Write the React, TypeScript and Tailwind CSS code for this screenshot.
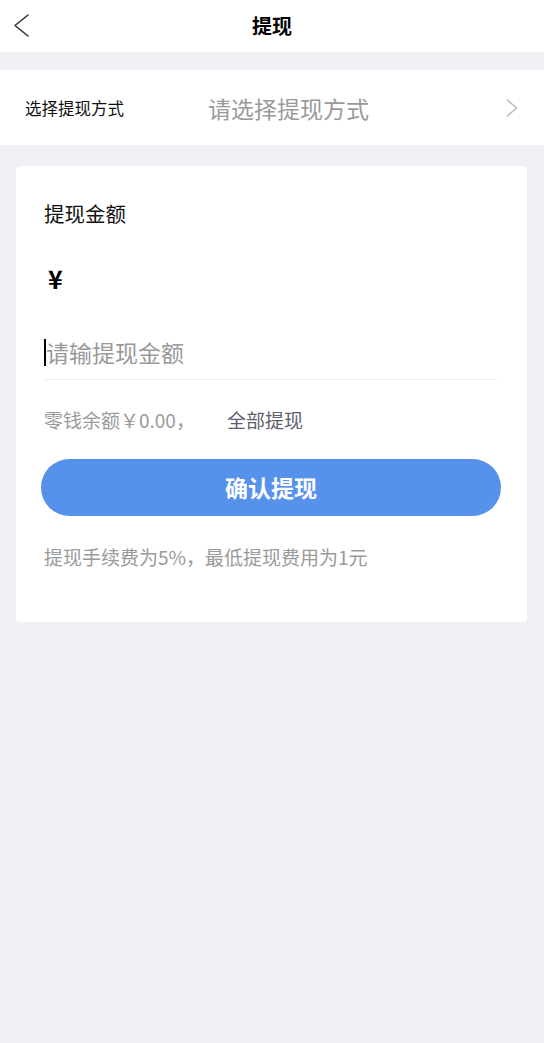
import React from "react";

export default function App() {
  return (
    <div className="min-h-[1043px] w-full bg-[#efeff4] [font-family:'Noto_Sans_CJK_SC','Noto_Sans',sans-serif]">
      {/* Header */}
      <div className="flex h-[52px] items-center bg-white">
        <div className="flex w-[60px] items-center pl-[13px]">
          <svg width="18" height="26" viewBox="0 0 18 26" fill="none">
            <polyline points="15,2 2,12.5 15,23" stroke="#333" strokeWidth="1.6" strokeLinecap="round" strokeLinejoin="round" />
          </svg>
        </div>
        <div className="flex-1 text-center text-[20px] font-bold leading-[28px] text-black">提现</div>
        <div className="w-[60px]" />
      </div>

      {/* Select method row */}
      <div className="mt-[18px] flex h-[75px] items-center bg-white pl-[25px] pr-[26px]">
        <div className="w-[183px] text-[16.5px] leading-[22px] text-[#111]">选择提现方式</div>
        <div className="flex-1 text-[23px] leading-[30px] text-[#9a9a9a]">请选择提现方式</div>
        <svg width="12" height="18" viewBox="0 0 12 18" fill="none">
          <polyline points="1.5,1 10.5,9 1.5,17" stroke="#bbbbbb" strokeWidth="1.5" strokeLinecap="round" strokeLinejoin="round" />
        </svg>
      </div>

      {/* Card */}
      <div className="ml-[16px] mr-[17px] mt-[21px] rounded-[4px] bg-white pb-[52px] pl-[28px] pr-[30px] pt-[33px]">
        <div className="text-[20.5px] leading-[28px] text-[#111]">提现金额</div>
        <div className="mt-[37px] pl-[4px] text-[25px] font-bold leading-[28px] text-black">¥</div>

        <div className="mt-[38px] border-b border-[#ededed] pb-[5px]">
          <div className="flex h-[44px] items-center">
            <span className="h-[27px] w-[2px] bg-black" />
            <input
              className="h-[44px] flex-1 bg-transparent text-[23px] text-[#333] outline-none placeholder:text-[#999]"
              placeholder="请输提现金额"
            />
          </div>
        </div>

        <div className="mt-[27px] flex text-[19px] leading-[26px]">
          <span className="text-[#9a9a9a]">零钱余额￥0.00，</span>
          <span className="ml-[32px] text-[#5e6070]">全部提现</span>
        </div>

        <button className="-ml-[3px] mt-[26px] flex h-[57px] w-[460px] items-center justify-center rounded-full bg-[#5692ec] text-[23px] font-bold text-white">
          确认提现
        </button>

        <div className="mt-[28px] text-[19px] leading-[26px] text-[#9a9a9a]">提现手续费为5%，最低提现费用为1元</div>
      </div>
    </div>
  );
}
